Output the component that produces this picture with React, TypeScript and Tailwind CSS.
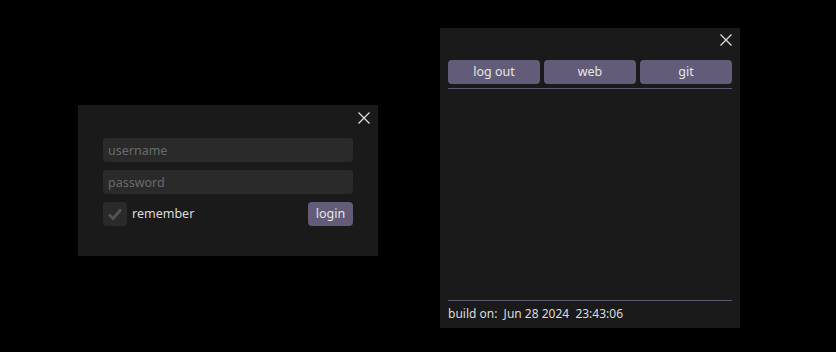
import { useState } from 'react';

const CloseIcon = () => (
    <svg width="12" height="12" viewBox="0 0 12 12" className="block">
        <path d="M0.5 0.5 L11.5 11.5 M11.5 0.5 L0.5 11.5" stroke="#dcdcdc" strokeWidth="1.3" />
    </svg>
);

function LoginWindow() {
    const [remember, setRemember] = useState(true);
    return (
        <div className="w-[300px] h-[151px] bg-[#1a1a1a] flex flex-col">
            <div className="flex justify-end pt-[7px] pr-[8px] h-[33px]">
                <button className="w-3 h-3"><CloseIcon /></button>
            </div>
            <div className="flex flex-col gap-2 px-[25px]">
                <input
                    placeholder="username"
                    className="h-6 rounded-[4px] bg-[#2a2a2a] px-[5px] text-[12.5px] text-[#dcdcdc] placeholder:text-[#6a6a6a] outline-none"
                />
                <input
                    type="password"
                    placeholder="password"
                    className="h-6 rounded-[4px] bg-[#2a2a2a] px-[5px] text-[12.5px] text-[#dcdcdc] placeholder:text-[#6a6a6a] outline-none"
                />
                <div className="flex items-center justify-between">
                    <label className="flex items-center gap-[5px] cursor-pointer" onClick={() => setRemember(!remember)}>
                        <span className="w-6 h-6 rounded-[4px] bg-[#2a2a2a] flex items-center justify-center">
                            {remember && (
                                <svg width="16" height="14" viewBox="0 0 16 14">
                                    <path d="M2 7.5 L6 11.5 L14 2.5" stroke="#525252" strokeWidth="3" fill="none" />
                                </svg>
                            )}
                        </span>
                        <span className="text-[12.5px] text-[#dcdcdc] pt-px">remember</span>
                    </label>
                    <button className="h-6 w-[45px] rounded-[4px] bg-[#625c79] text-[12.5px] text-[#e6e6e6]">login</button>
                </div>
            </div>
        </div>
    );
}

function MainWindow() {
    return (
        <div className="w-[300px] h-[300px] bg-[#1a1a1a] flex flex-col px-2">
            <div className="flex justify-end pt-[6px] h-[32px]">
                <button className="w-3 h-3"><CloseIcon /></button>
            </div>
            <div className="grid grid-cols-3 gap-1">
                {['log out', 'web', 'git'].map(label => (
                    <button key={label} className="h-6 rounded-[4px] bg-[#625c79] text-[12.5px] text-[#e6e6e6]">{label}</button>
                ))}
            </div>
            <div className="mt-[4px] h-px bg-[#5c5874]" />
            <div className="flex-1" />
            <div className="h-px bg-[#5c5874]" />
            <div className="pt-[4px] pb-[5px] text-[12px] text-[#dcdcdc] whitespace-pre">build on:  Jun 28 2024  23:43:06</div>
        </div>
    );
}

export default function App() {
    return (
        <div className="w-[836px] h-[352px] bg-black relative" style={{ fontFamily: '"Noto Sans", "Open Sans", sans-serif' }}>
            <div className="absolute left-[78px] top-[105px]"><LoginWindow /></div>
            <div className="absolute left-[440px] top-[28px]"><MainWindow /></div>
        </div>
    );
}
